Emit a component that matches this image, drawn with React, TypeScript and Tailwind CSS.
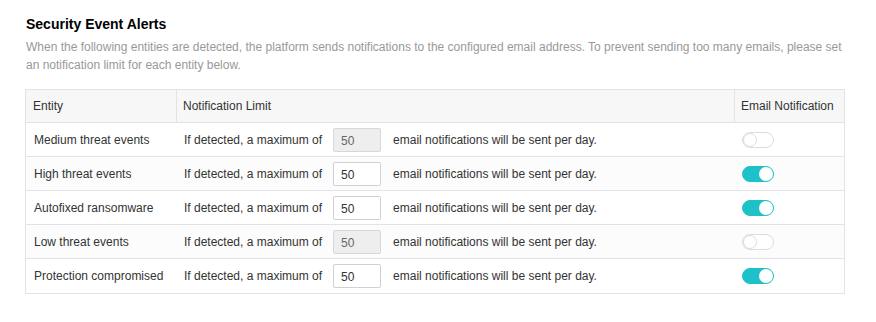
import { useState } from "react";

type Entity = {
    name: string;
    limit: number;
    enabled: boolean;
};

const ENTITIES: Entity[] = [
    { name: "Medium threat events", limit: 50, enabled: false },
    { name: "High threat events", limit: 50, enabled: true },
    { name: "Autofixed ransomware", limit: 50, enabled: true },
    { name: "Low threat events", limit: 50, enabled: false },
    { name: "Protection compromised", limit: 50, enabled: true },
];

const Toggle = ({ on, onClick }: { on: boolean; onClick: () => void }) => {
    return (
        <button
            onClick={onClick}
            className={`relative w-[32px] h-[16px] rounded-full border ${on ? "bg-[#1ec1c9] border-[#1ec1c9]" : "bg-white border-[#dcdcdc]"}`}
        >
            <span
                className={`absolute top-[0px] w-[14px] h-[14px] rounded-full bg-white ${on ? "right-[0px]" : "left-[0px] border border-[#dcdcdc]"}`}
            />
        </button>
    );
};

const App = () => {
    const [rows, setRows] = useState<Entity[]>(ENTITIES);

    const toggle = (index: number) => {
        setRows(prev => prev.map((row, i) => i === index ? { ...row, enabled: !row.enabled } : row));
    };

    return (
        <div className="w-[876px] h-[322px] bg-white pl-[25px] pt-[14px] font-['Liberation_Sans',Arial,sans-serif] text-[12px] text-[#333]">
            <h2 className="text-[14px] leading-[20px] font-bold text-black pl-[1px]">Security Event Alerts</h2>
            <p className="mt-[4px] w-[820px] pl-[1px] leading-[18px] text-[#999]">
                When the following entities are detected, the platform sends notifications to the configured email address. To prevent sending too many emails, please set an notification limit for each entity below.
            </p>

            <div className="mt-[15px] w-[820px] border border-[#e2e2e8]">
                <div className="flex h-[33px] items-center bg-[#f7f7f7] border-b border-[#e2e2e8]">
                    <div className="w-[151px] h-full flex items-center pl-[7px] border-r border-[#e2e2e8]">Entity</div>
                    <div className="flex-1 h-full flex items-center pl-[6px] border-r border-[#e2e2e8]">Notification Limit</div>
                    <div className="w-[109px] h-full flex items-center pl-[6px]">Email Notification</div>
                </div>
                {rows.map((row, index) => {
                    const disabled = !row.enabled;
                    return (
                        <div
                            key={row.name}
                            className={`flex h-[34px] items-center ${index % 2 === 1 ? "bg-[#fcfcfc]" : "bg-white"} ${index < rows.length - 1 ? "border-b border-[#e2e2e8]" : ""}`}
                        >
                            <div className="w-[151px] h-full flex items-center pl-[8px]">{row.name}</div>
                            <div className="flex-1 h-full flex items-center pl-[7px]">
                                <span>If detected, a maximum of</span>
                                <input
                                    type="text"
                                    value={row.limit}
                                    disabled={disabled}
                                    readOnly
                                    className={`ml-[11px] w-[48px] h-[24px] pl-[7px] pt-[2px] rounded-[2px] border outline-none text-[12px] ${disabled ? "bg-[#eeeeee] border-[#d6d6dc] text-[#666]" : "bg-white border-[#d0d0d6] text-[#333]"}`}
                                />
                                <span className="ml-[12px]">email notifications will be sent per day.</span>
                            </div>
                            <div className="w-[109px] h-full flex items-center pl-[7px]">
                                <Toggle on={row.enabled} onClick={() => toggle(index)} />
                            </div>
                        </div>
                    );
                })}
            </div>
        </div>
    );
};

export default App;
